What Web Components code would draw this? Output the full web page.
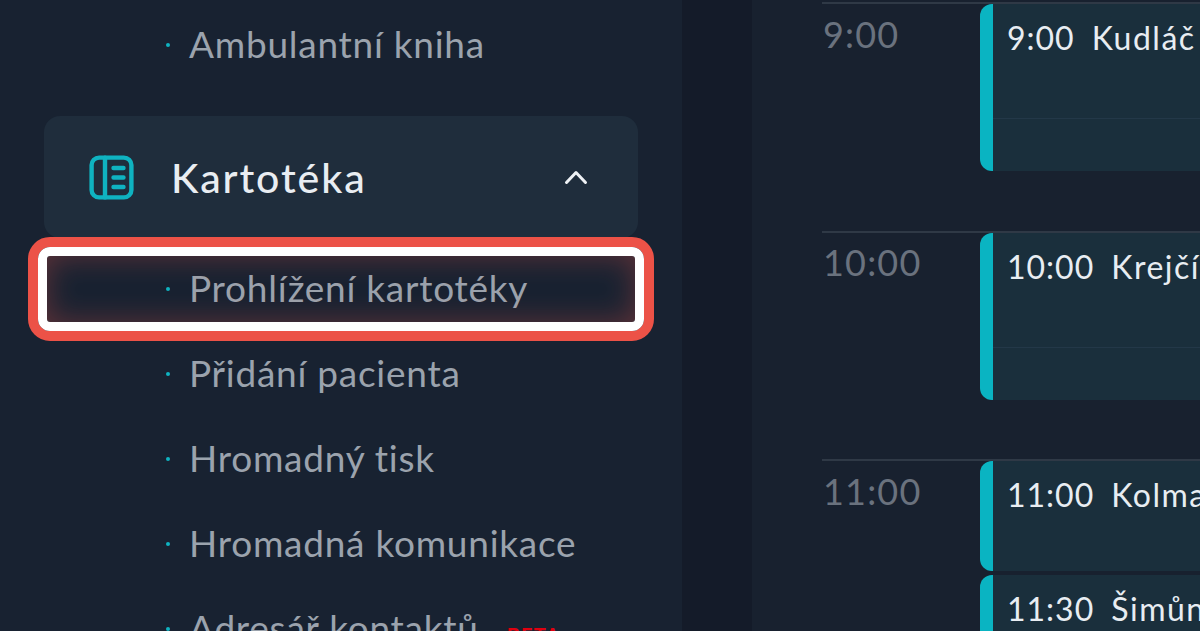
<!doctype html>
<html lang="cs">
<head>
<meta charset="utf-8">
<title>Kartotéka</title>
<style>
  html, body { margin: 0; height: 631px; overflow: hidden; background: #141b29; }
  body { font-family: "Lato", "Noto Sans", sans-serif; }
</style>
</head>
<body>
<app-shell>
  <side-nav slot="nav">
    <nav-item>Ambulantní kniha</nav-item>
    <nav-group label="Kartotéka">
      <nav-item highlighted>Prohlížení kartotéky</nav-item>
      <nav-item>Přidání pacienta</nav-item>
      <nav-item>Hromadný tisk</nav-item>
      <nav-item>Hromadná komunikace</nav-item>
      <nav-item beta>Adresář kontaktů</nav-item>
    </nav-group>
  </side-nav>
  <day-agenda slot="main">
    <hour-row hour="9:00">
      <visit-card time="9:00" name="Kudláč" height="167" divided></visit-card>
    </hour-row>
    <hour-row hour="10:00">
      <visit-card time="10:00" name="Krejčí" height="167" divided></visit-card>
    </hour-row>
    <hour-row hour="11:00">
      <visit-card time="11:00" name="Kolma" height="110"></visit-card>
      <visit-card time="11:30" name="Šimůn" height="110"></visit-card>
    </hour-row>
  </day-agenda>
</app-shell>

<script>
const FONT = '"Lato", "Noto Sans", sans-serif'

class AppShell extends HTMLElement {
    constructor () {
        super()
        this.attachShadow({ mode: 'open' })
        this.shadowRoot.innerHTML = `
          <style>
            :host { display: flex; width: 1200px; height: 631px; overflow: hidden; font-family: ${FONT}; }
            .nav { flex: 0 0 682px; background: #182231; }
            .gutter { flex: 0 0 70px; background: #141b29; }
            .main { flex: 1; min-width: 0; background: #18212f; overflow: hidden; }
          </style>
          <div class="nav"><slot name="nav"></slot></div>
          <div class="gutter"></div>
          <div class="main"><slot name="main"></slot></div>
        `
    }
}

class SideNav extends HTMLElement {
    constructor () {
        super()
        this.attachShadow({ mode: 'open' })
        this.shadowRoot.innerHTML = `
          <style>
            :host { display: flex; flex-direction: column; gap: 29px; padding: 2px 44px 0; }
          </style>
          <slot></slot>
        `
    }
}

class NavGroup extends HTMLElement {
    constructor () {
        super()
        this.attachShadow({ mode: 'open' })
        this.shadowRoot.innerHTML = `
          <style>
            :host { display: block; }
            .head {
              display: flex; align-items: center; height: 122px; box-sizing: border-box;
              padding: 0 50px 0 45px; border-radius: 16px; background: #1f2d3c;
              color: #e9edf2; font-size: 41px; font-weight: 500; letter-spacing: 1.9px;
            }
            .label { flex: 1; margin-left: 37px; }
            .items { display: block; padding-top: 8px; }
            svg { display: block; }
          </style>
          <div class="head">
            <svg width="45" height="45" viewBox="0 0 45 45" fill="none" stroke="#0fb3c1" stroke-width="4.4" stroke-linecap="round">
              <rect x="2.6" y="2.6" width="39.8" height="39.8" rx="7.5"/>
              <path d="M16 2.6v39.8"/>
              <path d="M24.5 13h10M24.5 22.5h10M24.5 32h10"/>
            </svg>
            <span class="label"></span>
            <svg width="24" height="16" viewBox="0 0 24 16" fill="none" stroke="#eef1f5" stroke-width="3" stroke-linecap="round" stroke-linejoin="round">
              <path d="M2.5 13.5 12 3.5l9.5 10"/>
            </svg>
          </div>
          <div class="items"><slot></slot></div>
        `
        this.shadowRoot.querySelector('.label').textContent = this.getAttribute('label')
    }
}

class NavItem extends HTMLElement {
    constructor () {
        super()
        this.attachShadow({ mode: 'open' })
        this.shadowRoot.innerHTML = `
          <style>
            :host {
              display: flex; align-items: center; position: relative; height: 85px;
              padding-left: 122px; color: #9ba3ad; font-size: 37px; white-space: nowrap;
            }
            .dot { width: 4px; height: 4px; margin-right: 19px; border-radius: 50%; background: #0fb3c1; }
            .label { padding-bottom: 3px; letter-spacing: .75px; }
            .beta { margin: 12px 0 0 28px; color: #e0000f; font-size: 20px; font-weight: 700; letter-spacing: 1.2px; }
            .ring {
              position: absolute; left: -16px; top: -9px; width: 626px; height: 104px; box-sizing: border-box;
              border: 10px solid #ec5247; border-radius: 22px; pointer-events: none;
            }
            .ring::before {
              content: ''; position: absolute; inset: 0; border: 9px solid #fff; border-radius: 12px;
              box-shadow: inset 0 0 30px rgba(236, 82, 71, .34);
            }
          </style>
          <span class="dot"></span><span class="label"><slot></slot></span>
        `
        if (this.hasAttribute('beta')) {
            const badge = document.createElement('span')
            badge.className = 'beta'
            badge.textContent = 'BETA'
            this.shadowRoot.appendChild(badge)
        }
        if (this.hasAttribute('highlighted')) {
            const ring = document.createElement('div')
            ring.className = 'ring'
            this.shadowRoot.appendChild(ring)
        }
    }
}

class DayAgenda extends HTMLElement {
    constructor () {
        super()
        this.attachShadow({ mode: 'open' })
        this.shadowRoot.innerHTML = `
          <style>
            :host { display: block; padding: 2px 0 0 70px; }
          </style>
          <slot></slot>
        `
    }
}

class HourRow extends HTMLElement {
    constructor () {
        super()
        this.attachShadow({ mode: 'open' })
        this.shadowRoot.innerHTML = `
          <style>
            :host {
              display: grid; grid-template-columns: 158px 1fr; height: 228.5px; box-sizing: border-box;
              border-top: 2px solid #2f3946;
            }
            .hour {
              padding: 7.5px 0 0 1px; color: #6a727e; font-size: 36px; line-height: 44px;
              letter-spacing: 1.2px;
            }
            .cards { display: flex; flex-direction: column; gap: 4px; min-width: 0; }
          </style>
          <div class="hour"></div>
          <div class="cards"><slot></slot></div>
        `
        this.shadowRoot.querySelector('.hour').textContent = this.getAttribute('hour')
    }
}

class VisitCard extends HTMLElement {
    constructor () {
        super()
        this.attachShadow({ mode: 'open' })
        this.shadowRoot.innerHTML = `
          <style>
            :host {
              display: block; flex: none; box-sizing: border-box; position: relative; overflow: hidden;
              border-left: 13px solid #0ab4c2; border-radius: 12px 0 0 12px;
              background: #1a2f3c; color: #e8edf2; font-size: 32px; white-space: nowrap;
            }
            .text { padding: 14px 0 0 14px; line-height: 40px; display: flex; gap: 17px; }
            .time { letter-spacing: 1px; }
            .name { letter-spacing: 1.5px; }
            .rule { position: absolute; left: 0; right: 0; top: 114px; height: 1px; background: #233848; }
          </style>
          <div class="text"><span class="time"></span><span class="name"></span></div>
        `
        this.style.height = this.getAttribute('height') + 'px'
        this.shadowRoot.querySelector('.time').textContent = this.getAttribute('time')
        this.shadowRoot.querySelector('.name').textContent = this.getAttribute('name')
        if (this.hasAttribute('divided')) {
            const rule = document.createElement('div')
            rule.className = 'rule'
            this.shadowRoot.appendChild(rule)
        }
    }
}

customElements.define('app-shell', AppShell)
customElements.define('side-nav', SideNav)
customElements.define('nav-group', NavGroup)
customElements.define('nav-item', NavItem)
customElements.define('day-agenda', DayAgenda)
customElements.define('hour-row', HourRow)
customElements.define('visit-card', VisitCard)
</script>
</body>
</html>
